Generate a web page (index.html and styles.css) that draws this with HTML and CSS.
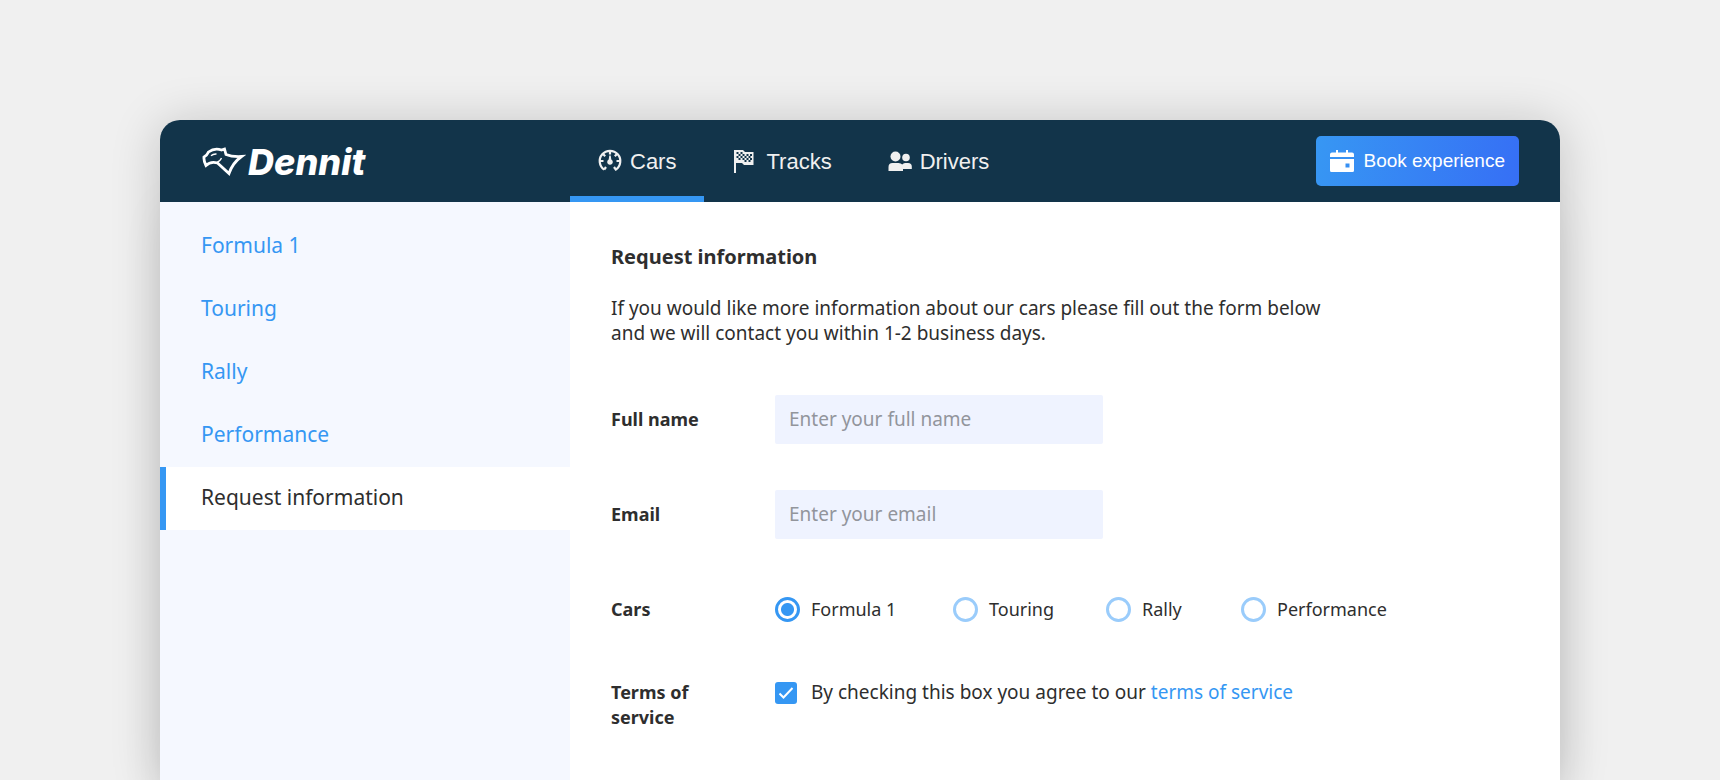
FILE: index.html
```html
<!DOCTYPE html>
<html lang="en">
<head>
<meta charset="utf-8">
<title>Dennit – Request information</title>
<link rel="stylesheet" href="styles.css">
</head>
<body>
<div class="app">
  <header class="header">
    <a class="brand" href="#">
      <svg class="brand-mark" viewBox="0 0 45 32" fill="none" stroke="#fff" stroke-width="2.800" stroke-linejoin="miter">
        <path d="M5 19.500Q2.600 15 3 11Q6 9.500 7.500 6Q13.500 1.500 20.500 4L23.500 3L25 8.500Q31 11 40.500 10.500Q31.500 17 28 27.500L16.500 17Q9.500 15 5 19.500Z"/>
        <path d="M10 9.800Q12 7.800 15.500 8" stroke-width="1.300"/>
        <path d="M15.500 16.500Q19 15.500 20.500 12" stroke-width="1.300"/>
      </svg>
      <span class="brand-name">Dennit</span>
    </a>
    <nav class="tabs">
      <a class="tab tab-active" href="#">
        <svg class="icon" viewBox="0 0 24 24" fill="none" stroke="currentColor" stroke-width="2.200">
          <path d="M6.200 20.600A10.300 10.300 0 1 1 17.800 20.600L16 18"/><path d="M6.200 20.600L8 18M12 2V5.500M2 12H5.500M22 12H18.500M5 5L7.200 7.200M19 5L16.800 7.200"/>
          <path d="M11.300 6.500H12.700L13.300 10.500A2.800 2.800 0 1 1 10.700 10.500Z" fill="currentColor" stroke="none"/>
        </svg>
        Cars
      </a>
      <a class="tab" href="#">
        <svg class="icon icon-flag" viewBox="0 0 26 24" fill="currentColor">
          <path d="M2 1H11L13 3H21.500V16H12L10 14H4V24H2Z"/>
          <path fill="#12344a" d="M4.500 3h2v2h-2zM8.500 3h2v2h-2zM6.500 5h2v2h-2zM10.500 5h2v2h-2zM4.500 7h2v2h-2zM8.500 7h2v2h-2zM12.500 7h2v2h-2zM16.500 7h2v2h-2zM6.500 9h2v2h-2zM10.500 9h2v2h-2zM14.500 9h2v2h-2zM18 9h2v2h-2zM12.500 11h2v2h-2zM16.500 11h2v2h-2zM14.500 5h2v2h-2zM18 5h2v2h-2z"/>
        </svg>
        Tracks
      </a>
      <a class="tab" href="#">
        <svg class="icon" viewBox="0 0 24 24" fill="currentColor">
          <circle cx="7.500" cy="7.500" r="5"/><circle cx="18" cy="8.500" r="3.800"/>
          <path d="M.500 22V18Q.500 14 4.500 14H10.500Q13 14 14.200 15.500Q15.500 14 17 14H20Q23.800 14 23.800 17.500V20H15V22Z"/>
        </svg>
        Drivers
      </a>
    </nav>
    <button class="book" type="button">
      <svg class="icon" viewBox="0 0 24 24" fill="currentColor">
        <path d="M6 1h2v2.500h8V1h2v2.500h4a2 2 0 0 1 2 2V8H0V5.500a2 2 0 0 1 2-2h4z"/>
        <path fill-rule="evenodd" d="M0 10H24V21.500a1.500 1.500 0 0 1-1.500 1.500H1.500A1.500 1.500 0 0 1 0 21.500ZM15.500 14.500h4v4H15.500Z"/>
      </svg>
      Book experience
    </button>
  </header>
  <div class="body">
    <nav class="sidebar">
      <a class="side-link" href="#">Formula 1</a>
      <a class="side-link" href="#">Touring</a>
      <a class="side-link" href="#">Rally</a>
      <a class="side-link" href="#">Performance</a>
      <a class="side-link side-active" href="#">Request information</a>
    </nav>
    <main class="content">
      <h1 class="title">Request information</h1>
      <p class="intro">If you would like more information about our cars please fill out the form below and we will contact you within 1-2 business days.</p>
      <form class="form">
        <div class="row">
          <label class="label" for="name">Full name</label>
          <input class="field" id="name" type="text" placeholder="Enter your full name">
        </div>
        <div class="row">
          <label class="label" for="email">Email</label>
          <input class="field" id="email" type="email" placeholder="Enter your email">
        </div>
        <div class="row row-cars" role="radiogroup" aria-labelledby="cars">
          <span class="label" id="cars">Cars</span>
          <div class="choices">
            <label class="choice"><input class="radio" type="radio" name="car" checked>Formula 1</label>
            <label class="choice"><input class="radio" type="radio" name="car">Touring</label>
            <label class="choice"><input class="radio" type="radio" name="car">Rally</label>
            <label class="choice"><input class="radio" type="radio" name="car">Performance</label>
          </div>
        </div>
        <div class="row row-terms">
          <label class="label" for="terms">Terms of service</label>
          <div class="agree">
            <span class="tick">
              <input class="check" id="terms" type="checkbox" checked>
              <svg class="tick-mark" viewBox="0 0 22 22" fill="none" stroke="#fff" stroke-width="2"><path d="M4.500 11.500L8.500 15.500L17.500 6"/></svg>
            </span>
            <span>By checking this box you agree to our <a class="link" href="#">terms of service</a></span>
          </div>
        </div>
      </form>
    </main>
  </div>
</div>
</body>
</html>
```
FILE: styles.css
```css
* { box-sizing: border-box; }
body {
  margin: 0;
  padding: 120px 160px 0;
  min-height: 100vh;
  display: flex;
  background: #f0f0f0;
  color: #2e2e2e;
  font: 18px/25px "Noto Sans", sans-serif;
}
a { text-decoration: none; color: #3597f3; }
.app {
  flex: 1;
  display: flex;
  flex-direction: column;
  border-radius: 20px 20px 0 0;
  background: #fff;
  box-shadow: 0 4px 50px rgba(0, 0, 0, 0.2), 0 80px 50px -10px rgba(0, 0, 0, 0.1);
}
.header {
  height: 82px;
  display: grid;
  grid-template-columns: 410px 1fr auto;
  align-items: center;
  padding-right: 41px;
  border-radius: 20px 20px 0 0;
  background: #12344a;
  font-family: "Liberation Sans", Arial, sans-serif;
}
.brand { display: flex; align-items: center; gap: 2px; padding: 2px 0 0 41px; }
.brand-mark { width: 45px; height: 32px; }
.brand-name { color: #fff; font: italic 800 36px/40px Inter, sans-serif; }
.tabs { display: flex; align-self: stretch; }
.tab {
  display: flex;
  align-items: center;
  gap: 8px;
  padding: 0 28px;
  color: #f0f0f0;
  font-size: 22px;
}
.tab-active { box-shadow: inset 0 -6px #3597f3; }
.icon { width: 24px; height: 24px; flex: none; }
.icon-flag { width: 26px; }
.book {
  display: flex;
  align-items: center;
  gap: 9px;
  height: 50px;
  padding: 0 14px;
  border: 0;
  border-radius: 5px;
  background: linear-gradient(100deg, #3797f3, #366ff5);
  color: #fff;
  font: 19px/24px "Liberation Sans", Arial, sans-serif;
}
.body { flex: 1; display: grid; grid-template-columns: 410px 1fr; }
.sidebar { padding-top: 13px; background: #f5f8ff; }
.side-link { display: block; padding: 0 41px 2px; font-size: 21px; line-height: 61px; }
.side-active { background: #fff; color: #2e2e2e; box-shadow: inset 6px 0 #3597f3; }
.content { padding: 42px 41px 0; }
.title { margin: 0; font-size: 20px; line-height: 26px; }
.intro { max-width: 730px; margin: 26px 0 49px; font-size: 19px; }
.form { display: grid; gap: 46px; }
.row { display: grid; grid-template-columns: 164px 1fr; align-items: center; }
.label { max-width: 110px; font-weight: 700; font-size: 18px; }
.field {
  width: 328px;
  height: 49px;
  padding: 0 14px 2px;
  border: 0;
  border-radius: 2px;
  background: #eff3ff;
  color: inherit;
  font: inherit;
  font-size: 19px;
}
.field::placeholder { color: #92959c; opacity: 1; }
.row-cars { padding-top: 12px; }
.row-terms { align-items: start; padding-top: 12px; }
.choices { display: grid; grid-template-columns: 178px 153px 135px auto; }
.choice, .agree { display: flex; align-items: center; gap: 11px; }
.radio {
  appearance: none;
  width: 25px;
  height: 25px;
  margin: 0;
  border: 3px solid #9accfb;
  border-radius: 50%;
}
.radio:checked { border-color: #3597f3; background: radial-gradient(circle, #3597f3 6px, #fff 7px); }
.agree { gap: 14px; font-size: 19px; }
.tick { display: grid; }
.check {
  grid-area: 1 / 1;
  appearance: none;
  width: 22px;
  height: 22px;
  margin: 0;
  border-radius: 3px;
  background: #3597f3;
}
.tick-mark { grid-area: 1 / 1; width: 22px; height: 22px; pointer-events: none; }
```
